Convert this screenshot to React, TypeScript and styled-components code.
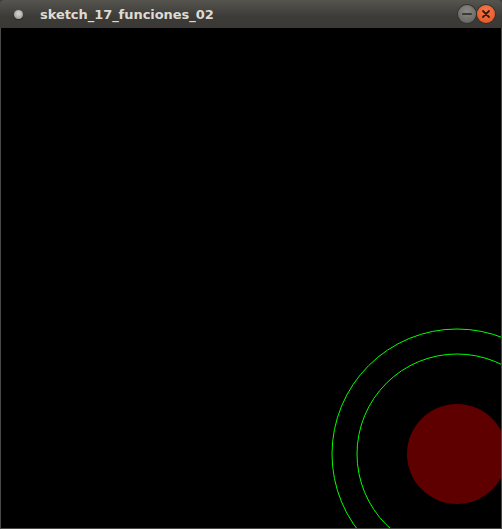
import React from 'react';
import styled, { createGlobalStyle } from 'styled-components';

const GlobalStyle = createGlobalStyle`
  html, body {
    margin: 0;
    padding: 0;
    background: #3c3b37;
  }
`;

export default function App() {
  return (
    <>
      <GlobalStyle />
      <Window>
        <TitleBar>
          <MenuDot />
          <Title>sketch_17_funciones_02</Title>
          <Controls>
            <WinButton>
              <svg width="18" height="18" viewBox="0 0 18 18">
                <line x1="5" y1="9" x2="13" y2="9" stroke="#3a3a38" strokeWidth="2" strokeLinecap="round" />
              </svg>
            </WinButton>
            <WinButton close>
              <svg width="18" height="18" viewBox="0 0 18 18">
                <path d="M6 6 L12 12 M12 6 L6 12" stroke="#3a1a10" strokeWidth="1.8" strokeLinecap="round" />
              </svg>
            </WinButton>
          </Controls>
        </TitleBar>
        <Frame>
          <Canvas width="500" height="500" viewBox="0 0 500 500">
            <circle cx="456" cy="426" r="125" fill="none" stroke="#00ff00" strokeWidth="1" />
            <circle cx="456" cy="426" r="100" fill="none" stroke="#00ff00" strokeWidth="1" />
            <circle cx="456" cy="426" r="50" fill="#5e0000" />
          </Canvas>
        </Frame>
      </Window>
    </>
  );
}

const Window = styled.div`
  width: 502px;
  height: 529px;
  display: flex;
  flex-direction: column;
  background: #3c3b37;
  overflow: hidden;
`;

const TitleBar = styled.div`
  height: 28px;
  display: flex;
  align-items: center;
  padding: 0 8px 0 12px;
  background: linear-gradient(#55544f, #3c3b37 60%, #3a3935);
  border-radius: 4px 4px 0 0;
  box-sizing: border-box;
`;

const MenuDot = styled.div`
  width: 9px;
  height: 9px;
  border-radius: 50%;
  background: radial-gradient(circle at 50% 40%, #d8d8d4, #8f8e88);
  box-shadow: 0 1px 1px #2a2a27;
  margin-left: 2px;
`;

const Title = styled.span`
  margin-left: 17px;
  font-family: 'DejaVu Sans', 'Noto Sans', sans-serif;
  font-weight: bold;
  font-size: 13px;
  color: #dfdbd2;
  flex: 1;
  letter-spacing: -0.05px;
`;

const Controls = styled.div`
  display: flex;
  gap: 1px;
  margin-right: -1px;
`;

const WinButton = styled.div<{ close?: boolean }>`
  width: 18px;
  height: 18px;
  border-radius: 50%;
  display: flex;
  align-items: center;
  justify-content: center;
  background: ${p =>
    p.close
      ? 'radial-gradient(circle at 50% 35%, #f7794b, #e2501f)'
      : 'radial-gradient(circle at 50% 35%, #8a8984, #5f5e5a)'};
  box-shadow: 0 0 0 1px #33322e;
`;

const Frame = styled.div`
  flex: 1;
  padding: 0 1px 1px 1px;
  background: #4a4945;
  display: flex;
`;

const Canvas = styled.svg`
  display: block;
  background: #000;
`;
